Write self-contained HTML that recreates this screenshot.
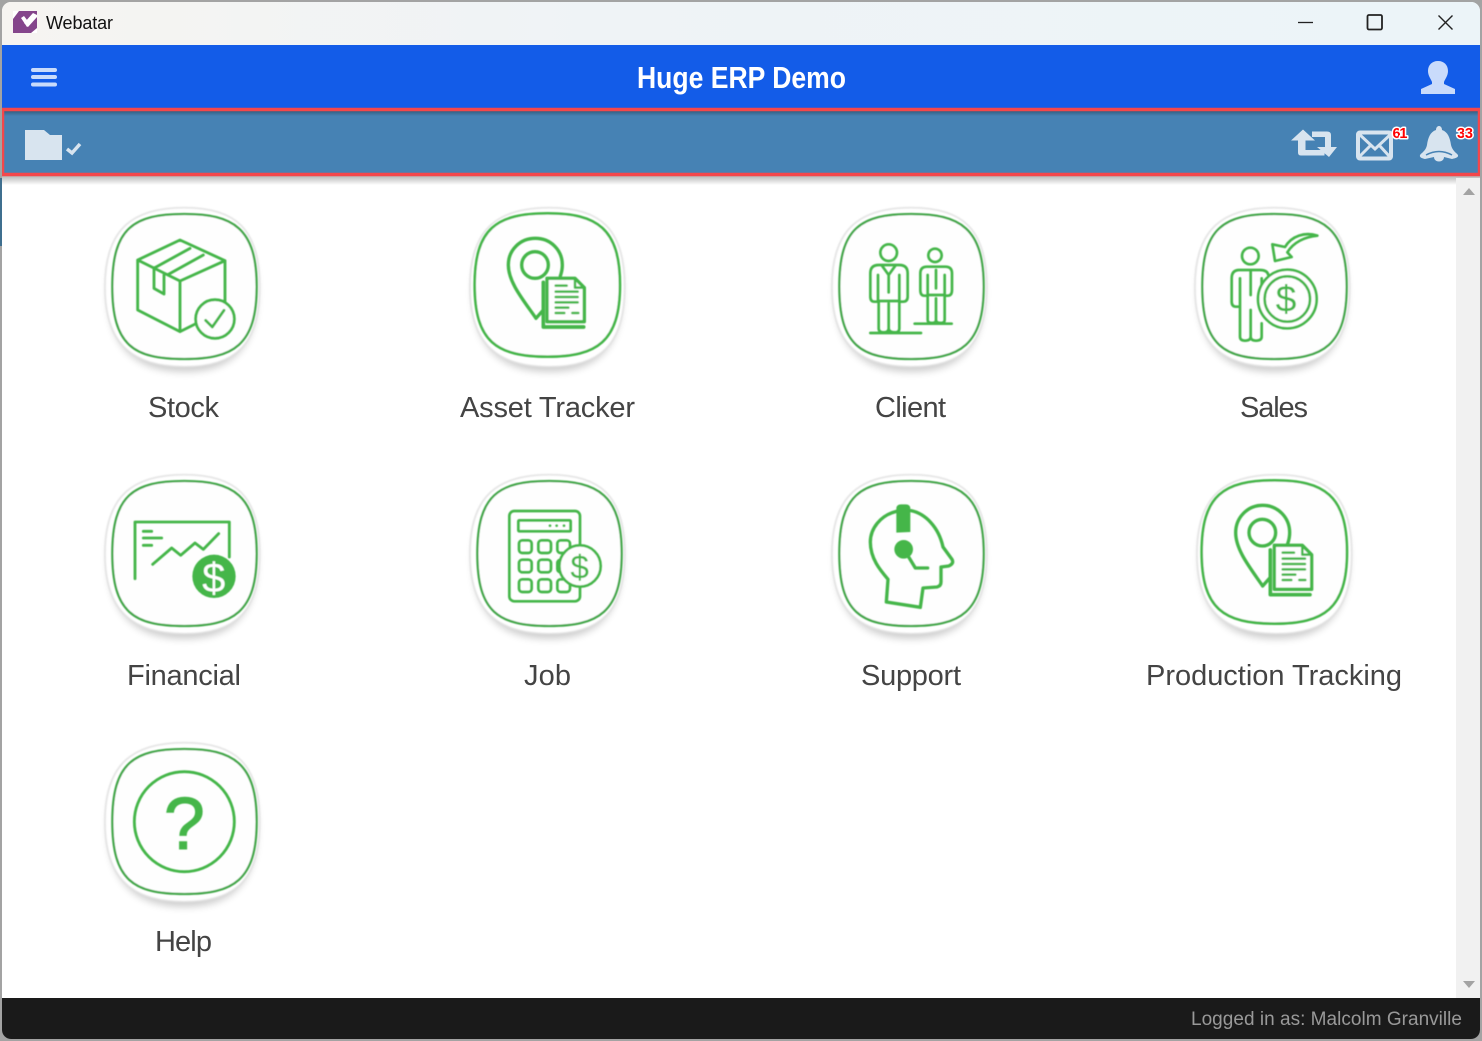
<!DOCTYPE html>
<html><head><meta charset="utf-8"><title>Webatar</title>
<style>
html,body{margin:0;padding:0;width:1482px;height:1041px;overflow:hidden;background:#a3a3a3}
svg{display:block}
text{font-family:"Liberation Sans",sans-serif}
.lb{font-size:29px;fill:#444;text-anchor:middle}
.ic{fill:none;stroke:#45b649;stroke-width:8.500;stroke-linecap:round;stroke-linejoin:round}
.fl{fill:#45b649;stroke:none}
.ch{fill:#d8e4ef}
</style></head><body>
<svg width="1482" height="1041" viewBox="0 0 1482 1041" xmlns="http://www.w3.org/2000/svg">
<defs>
<linearGradient id="tb" x1="0" x2="1" y1="0" y2="0"><stop offset="0" stop-color="#f6f4f1"/><stop offset=".4" stop-color="#eff3f6"/><stop offset="1" stop-color="#ecf4f8"/></linearGradient>
<linearGradient id="sh" x1="0" x2="0" y1="0" y2="1"><stop offset="0" stop-color="#000" stop-opacity=".28"/><stop offset="1" stop-color="#000" stop-opacity="0"/></linearGradient>
<clipPath id="win"><rect x="2" y="2" width="1478" height="1037" rx="9"/></clipPath>
<filter id="bl" x="-20%" y="-20%" width="140%" height="140%"><feGaussianBlur stdDeviation="12"/></filter>
<filter id="soft" x="-10%" y="-10%" width="120%" height="120%"><feGaussianBlur stdDeviation="1.300"/></filter>
<filter id="soft2" x="-10%" y="-10%" width="120%" height="120%"><feGaussianBlur stdDeviation="2.500"/></filter>
<symbol id="tile" viewBox="0 0 570 570" width="190" height="190" overflow="visible">
<path d="M283 75C420 75 500 125 500 295C500 465 420 530 283 530C145 530 55 465 55 295C55 125 145 75 283 75Z" fill="#000" opacity=".2" filter="url(#bl)"/>
<path d="M283 38C435 38 509 100 509 275C509 450 435 515 283 515C130 515 45 450 45 275C45 100 130 38 283 38Z" fill="#fff" stroke="#e2e2e2" stroke-width="5" filter="url(#soft2)"/>
<path d="M283 57C430 57 500 100 500 275C500 450 430 492 283 492C130 492 67 450 67 275C67 100 130 57 283 57Z" fill="#fefefe" stroke="#45a84c" stroke-width="7" filter="url(#soft)"/>
</symbol>
<symbol id="tile2" viewBox="0 0 570 570" width="190" height="190" overflow="visible">
<path d="M283 75C420 75 500 125 500 295C500 465 420 530 283 530C145 530 55 465 55 295C55 125 145 75 283 75Z" fill="#000" opacity=".2" filter="url(#bl)"/>
<path d="M283 38C435 38 509 100 509 275C509 450 435 515 283 515C130 515 45 450 45 275C45 100 130 38 283 38Z" fill="#fff" stroke="#e2e2e2" stroke-width="5" filter="url(#soft2)"/>
<path d="M278 55C425 55 495 100 495 270C495 440 425 485 278 485C125 485 59 440 59 270C59 100 125 55 278 55Z" fill="#fefefe" stroke="#45b649" stroke-width="8" filter="url(#soft)"/>
</symbol>
</defs>
<rect x="0" y="178" width="2" height="68" fill="#3f6f8f"/>
<g clip-path="url(#win)">
<rect x="2" y="2" width="1478" height="1037" fill="#fff"/>
<rect x="2" y="2" width="1478" height="43" fill="url(#tb)"/>
<rect x="2" y="45" width="1478" height="63" fill="#135ce8"/>
<rect x="2" y="108" width="1478" height="68" fill="#4682b4"/>
<rect x="2" y="111" width="1478" height="5" fill="url(#sh)"/>
<rect x="2" y="176" width="1478" height="9" fill="url(#sh)"/>
<rect x="2.5" y="109.5" width="1477" height="65" fill="none" stroke="#f4474b" stroke-width="3.5"/>
<rect x="1456" y="178" width="24" height="820" fill="#f1f1f1"/>
<path d="M1463 195L1469 188L1475 195Z" fill="#a3a3a3"/>
<path d="M1463 981H1475L1469 988Z" fill="#a3a3a3"/>
<rect x="2" y="998" width="1478" height="41" fill="#1a1a1a"/>
</g>

<!-- title bar -->
<rect x="13" y="11" width="24" height="22" fill="#84458b"/>
<path d="M13 11H19L13 19ZM24 23L33 13L37 15V17L28 27ZM21 18L24 16L30 24L27 27ZM31 33L37 28V33Z" fill="#fff"/>
<text x="46" y="29" font-size="18" fill="#111" textLength="67">Webatar</text>
<path d="M1298 22.5H1313" stroke="#222" stroke-width="1.3"/>
<rect x="1367.500" y="15" width="14.500" height="14.500" rx="1.500" fill="none" stroke="#222" stroke-width="1.8"/>
<path d="M1438.5 15.5L1452.5 29.5M1452.5 15.5L1438.5 29.5" stroke="#222" stroke-width="1.4"/>

<!-- header -->
<g fill="#c9dbfb">
<rect x="31" y="68" width="26" height="4" rx="2"/><rect x="31" y="75" width="26" height="4" rx="2"/><rect x="31" y="82.500" width="26" height="4" rx="2"/>
</g>
<text x="741.500" y="88" font-size="31" font-weight="bold" fill="#fff" text-anchor="middle" textLength="209" lengthAdjust="spacingAndGlyphs">Huge ERP Demo</text>
<path d="M1438 61C1444 61 1448 65 1448 71C1448 76 1445 79 1444 82V84L1455 89V94H1421V89L1432 84V82C1431 79 1428 76 1428 71C1428 65 1432 61 1438 61Z" fill="#c9dbfb"/>

<!-- bar left -->
<path class="ch" d="M25 130H44L50 135H62V160H25Z"/>
<path d="M67 149L72 153L80 144" fill="none" stroke="#d8e4ef" stroke-width="3.5"/>

<!-- bar right -->
<path class="ch" d="M1303 129.500L1315 140.500H1305.500V150H1324.500V155.500H1301Q1298 155.500 1298 152.500V140.500H1291Z"/>
<path class="ch" d="M1329 157L1317 147H1325V137H1312V131.500H1327Q1331 131.500 1331 135V147H1337Z"/>
<rect x="1358" y="132.500" width="33" height="26" rx="2" fill="none" stroke="#d8e4ef" stroke-width="4"/>
<path d="M1359 134L1375 149L1391 134M1359 157L1371 145M1390 157L1379 145" fill="none" stroke="#d8e4ef" stroke-width="3"/>
<path class="ch" d="M1439 126C1441 126 1442 128 1442 130C1448 132 1450 138 1451 145C1452 149 1454 151 1456 153C1460 156 1458 158 1452 159L1444 157C1444 163 1434 163 1434 157L1425 159C1420 158 1418 156 1422 153C1425 150 1426 149 1427 145C1428 138 1430 132 1436 130C1436 128 1437 126 1439 126Z"/>
<path d="M1426 155Q1439 148 1452 155" fill="none" stroke="#4682b4" stroke-width="1.500"/>
<text x="1400" y="138" font-size="14.500" font-weight="bold" fill="#f00" stroke="#fff" stroke-width="3" paint-order="stroke" stroke-linejoin="round" text-anchor="middle" textLength="15">61</text>
<text x="1465" y="138" font-size="14.500" font-weight="bold" fill="#f00" stroke="#fff" stroke-width="3" paint-order="stroke" stroke-linejoin="round" text-anchor="middle" textLength="16">33</text>

<!-- tiles -->
<use href="#tile" x="90" y="195"/><use href="#tile2" x="455" y="195"/><use href="#tile" x="817" y="195"/><use href="#tile" x="1180" y="195"/>
<use href="#tile" x="90" y="462"/><use href="#tile" x="455" y="462"/><use href="#tile" x="817" y="462"/><use href="#tile2" x="1182" y="462"/>
<use href="#tile" x="90" y="730"/>

<!-- Stock -->
<g transform="translate(90 195) scale(.33333)" class="ic" filter="url(#soft)">
<path d="M143 195L270 135L405 197L270 258ZM143 195V345L270 410V258M405 197V320M270 410L318 386"/>
<path d="M195 218L300 160M235 238L340 180M192 218V280L222 297V240"/>
<circle cx="375" cy="372" r="58" fill="#fefefe"/>
<path d="M347 376L367 396L402 346"/>
</g>

<!-- Asset Tracker -->
<g transform="translate(455 195) scale(.33333)" class="ic" filter="url(#soft)" style="stroke-width:10">
<path d="M243 370C205 315 160 262 160 210C160 165 195 130 241 130C287 130 322 165 322 210C322 222 320 232 316 243M243 370L265 345"/>
<circle cx="240" cy="210" r="40"/>
<path d="M276 250H360L388 278V380H276Z" fill="#fefefe"/>
<path d="M265 262V396H386" stroke-width="11"/>
<path d="M360 250V278H388M302 272H335M302 290H368M302 306H368M302 322H368M302 338H340M302 354H328M352 354H370" stroke-width="7.500"/>
</g>

<!-- Client -->
<g transform="translate(817 195) scale(.33333)" class="ic" filter="url(#soft)" style="stroke-width:8">
<circle cx="215" cy="173" r="25"/>
<path d="M160 235Q160 210 185 210H247Q272 210 272 235V305Q272 320 258 320H247V400Q247 412 235 412Q215 412 215 400V325V400Q215 412 200 412Q185 412 185 400V320H172Q160 320 160 305Z"/>
<path d="M183 240V318H247V240M195 212L215 240L235 212M215 240V292"/>
<path d="M160 414H312"/>
<circle cx="354" cy="181" r="20"/>
<path d="M310 235Q310 215 330 215H385Q405 215 405 235V285Q405 302 392 302H383V375Q383 384 372 384Q357 384 357 375V310V375Q357 384 345 384Q332 384 332 375V302H322Q310 302 310 285Z"/>
<path d="M332 240V300H383V240M357 225V280"/>
<path d="M293 386H404"/>
</g>

<!-- Sales -->
<g transform="translate(1180 195) scale(.33333)" class="ic" filter="url(#soft)" style="stroke-width:8">
<path d="M277 148L315 156C335 122 375 110 412 122C375 125 340 142 322 172L335 186L285 198Z"/>
<circle cx="211" cy="183" r="25"/>
<path d="M155 250Q155 225 178 225H240Q262 225 265 240M180 335H168Q155 335 155 320V250M180 250V335V425Q180 437 195 437Q212 437 212 425V345V425Q212 437 228 437Q245 437 245 425V385M212 228V300M245 250V290"/>
<circle cx="322" cy="312" r="88" fill="#fefefe"/>
<circle cx="322" cy="312" r="68"/>
<text x="318" y="350" font-size="112" text-anchor="middle" style="fill:#45b649;stroke:none">$</text>
</g>

<!-- Financial -->
<g transform="translate(90 462) scale(.33333)" class="ic" filter="url(#soft)">
<path d="M135 350V180H418V285"/>
<path d="M160 208H185M160 228H215M160 250H185"/>
<path d="M188 307L245 258L272 280L315 243L340 262L386 215"/>
<circle class="fl" cx="372" cy="343" r="65"/>
<text x="371" y="390" font-size="125" text-anchor="middle" style="fill:#fff;stroke:none">$</text>
</g>

<!-- Job -->
<g transform="translate(455 462) scale(.33333)" class="ic" filter="url(#soft)" style="stroke-width:8">
<rect x="163" y="147" width="212" height="271" rx="15"/>
<rect x="190" y="175" width="157" height="33" rx="3"/>
<g class="fl"><circle cx="285" cy="191" r="4"/><circle cx="305" cy="191" r="4"/><circle cx="327" cy="191" r="4"/></g>
<rect x="192" y="235" width="38" height="38" rx="10"/><rect x="250" y="235" width="38" height="38" rx="10"/><rect x="307" y="235" width="38" height="38" rx="10"/>
<rect x="192" y="293" width="38" height="38" rx="10"/><rect x="250" y="293" width="38" height="38" rx="10"/><rect x="307" y="293" width="38" height="38" rx="10"/>
<rect x="192" y="352" width="38" height="38" rx="10"/><rect x="250" y="352" width="38" height="38" rx="10"/><rect x="307" y="352" width="38" height="38" rx="10"/>
<circle cx="375" cy="312" r="62" fill="#fefefe"/>
<text x="374" y="349" font-size="100" text-anchor="middle" style="fill:#45b649;stroke:none">$</text>
</g>

<!-- Support -->
<g transform="translate(817 462) scale(.33333)" class="ic" filter="url(#soft)" style="stroke-width:10">
<path d="M238 148C190 160 160 200 160 240C160 290 190 325 213 352L208 420L310 436L318 378L360 375Q372 372 372 360L372 315L395 312Q412 305 405 292L378 255C365 195 325 155 282 146"/>
<path class="fl" d="M238 140Q238 127 252 127H266Q280 127 280 140V210L238 212Z"/>
<circle class="fl" cx="260" cy="262" r="28"/>
<path d="M275 285L295 318H332"/>
</g>

<!-- Production Tracking -->
<g transform="translate(1180 462) scale(.33333)" class="ic" filter="url(#soft)" style="stroke-width:10">
<path d="M248 372C210 317 167 264 167 212C167 167 202 130 248 130C294 130 329 167 329 212C329 224 327 234 323 245M248 372L270 347"/>
<circle cx="247" cy="212" r="40"/>
<path d="M283 250H367L395 278V382H283Z" fill="#fefefe"/>
<path d="M271 264V398H390" stroke-width="11"/>
<path d="M367 250V278H395M308 272H342M308 290H375M308 306H375M308 322H375M308 338H346M308 354H334M358 354H376" stroke-width="7.500"/>
</g>

<!-- Help -->
<g transform="translate(90 730) scale(.33333)" class="ic" filter="url(#soft)">
<circle cx="283" cy="275" r="150"/>
<text x="283" y="357" font-size="222" text-anchor="middle" style="fill:#45b649;stroke:#45b649;stroke-width:3;stroke-linejoin:miter">?</text>
</g>

<!-- labels -->
<text class="lb" x="183.500" y="417" textLength="71">Stock</text>
<text class="lb" x="547.500" y="417" textLength="175">Asset Tracker</text>
<text class="lb" x="910.500" y="417" textLength="71">Client</text>
<text class="lb" x="1274" y="417" textLength="68">Sales</text>
<text class="lb" x="184" y="685" textLength="114">Financial</text>
<text class="lb" x="547.500" y="685" textLength="47">Job</text>
<text class="lb" x="911" y="685" textLength="100">Support</text>
<text class="lb" x="1274" y="685" textLength="256">Production Tracking</text>
<text class="lb" x="183.500" y="951" textLength="57">Help</text>
<text x="1462" y="1025" font-size="19" fill="#999" text-anchor="end" textLength="271">Logged in as: Malcolm Granville</text>
</svg>
</body></html>
